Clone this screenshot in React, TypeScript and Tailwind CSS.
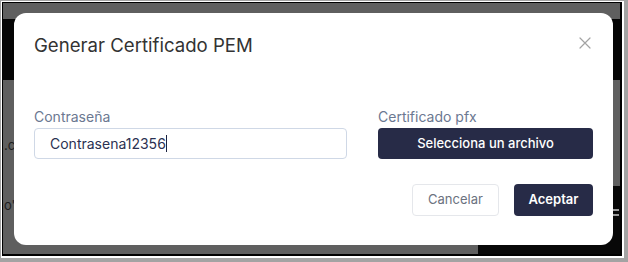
import * as React from "react";

function CloseIcon() {
  return (
    <svg width="12" height="12" viewBox="0 0 12 12" fill="none" stroke="#a3a3a3" strokeWidth="1.2" strokeLinecap="round">
      <path d="M1 1L11 11M11 1L1 11" />
    </svg>
  );
}

export default function App() {
  return (
    <div className="w-[628px] h-[262px] bg-[#a3a3a3] pt-px pl-px pr-[4px] pb-[4px]">
      <div className="w-full h-full bg-white pt-px pl-px pr-[2px] pb-[2px]">
        <div className="relative w-full h-full border border-black border-r-2 border-b-2 bg-[#5f5f5f] overflow-hidden pl-[11px] pt-[10px] pr-[7px] pb-[9px] font-['Inter',sans-serif]">
          {/* page behind the overlay */}
          <div className="absolute left-0 top-[16px] w-full h-[61px] bg-[#050505]" />
          <div className="absolute right-0 top-[183px] w-[142px] h-[80px] bg-[#080808]" />
          <div className="absolute left-[1px] top-[133px] text-[13px] text-[#1e1e1e]">.c</div>
          <div className="absolute left-[1px] top-[193px] text-[13px] text-[#1e1e1e]">o'</div>
          <div className="absolute right-[1px] top-[206px] w-[6px] h-[2px] bg-[#9a9a9a]" />
          <div className="absolute right-[1px] top-[211px] w-[6px] h-[2px] bg-[#9a9a9a]" />

          <div className="relative h-full bg-white rounded-xl px-5 pt-[18px] pb-[28px] flex flex-col">
            <div className="flex items-center justify-between">
              <h2 className="text-[18.6px] leading-7 text-[#333333] font-normal">Generar Certificado PEM</h2>
              <div className="mr-[2px] mt-[-4px]">
                <CloseIcon />
              </div>
            </div>

            <div className="flex gap-[31px] mt-[48px]">
              <div className="w-[313px] flex flex-col">
                <label className="text-[14px] leading-5 text-[#6b7891]">Contraseña</label>
                <div className="mt-px h-[31px] rounded-[4px] border border-[#cfd8e6] pl-[15px] flex items-center text-[14px] text-[#2b3152]">
                  <span>Contrasena12356</span>
                  <span className="w-px h-[17px] bg-[#1c2340]" />
                </div>
              </div>
              <div className="flex-1 flex flex-col">
                <label className="text-[14px] leading-5 text-[#6b7891]">Certificado pfx</label>
                <button className="mt-px h-[31px] rounded-[4px] bg-[#272b47] text-white text-[13px] font-medium">
                  Selecciona un archivo
                </button>
              </div>
            </div>

            <div className="flex justify-end gap-[15px] mt-[25px]">
              <button className="w-[87px] h-[32px] rounded-[4px] border border-[#e5e7eb] bg-white text-[13px] text-[#6b7280]">
                Cancelar
              </button>
              <button className="w-[79px] h-[32px] rounded-[4px] bg-[#272b47] text-white text-[13px] font-semibold">
                Aceptar
              </button>
            </div>
          </div>
        </div>
      </div>
    </div>
  );
}
